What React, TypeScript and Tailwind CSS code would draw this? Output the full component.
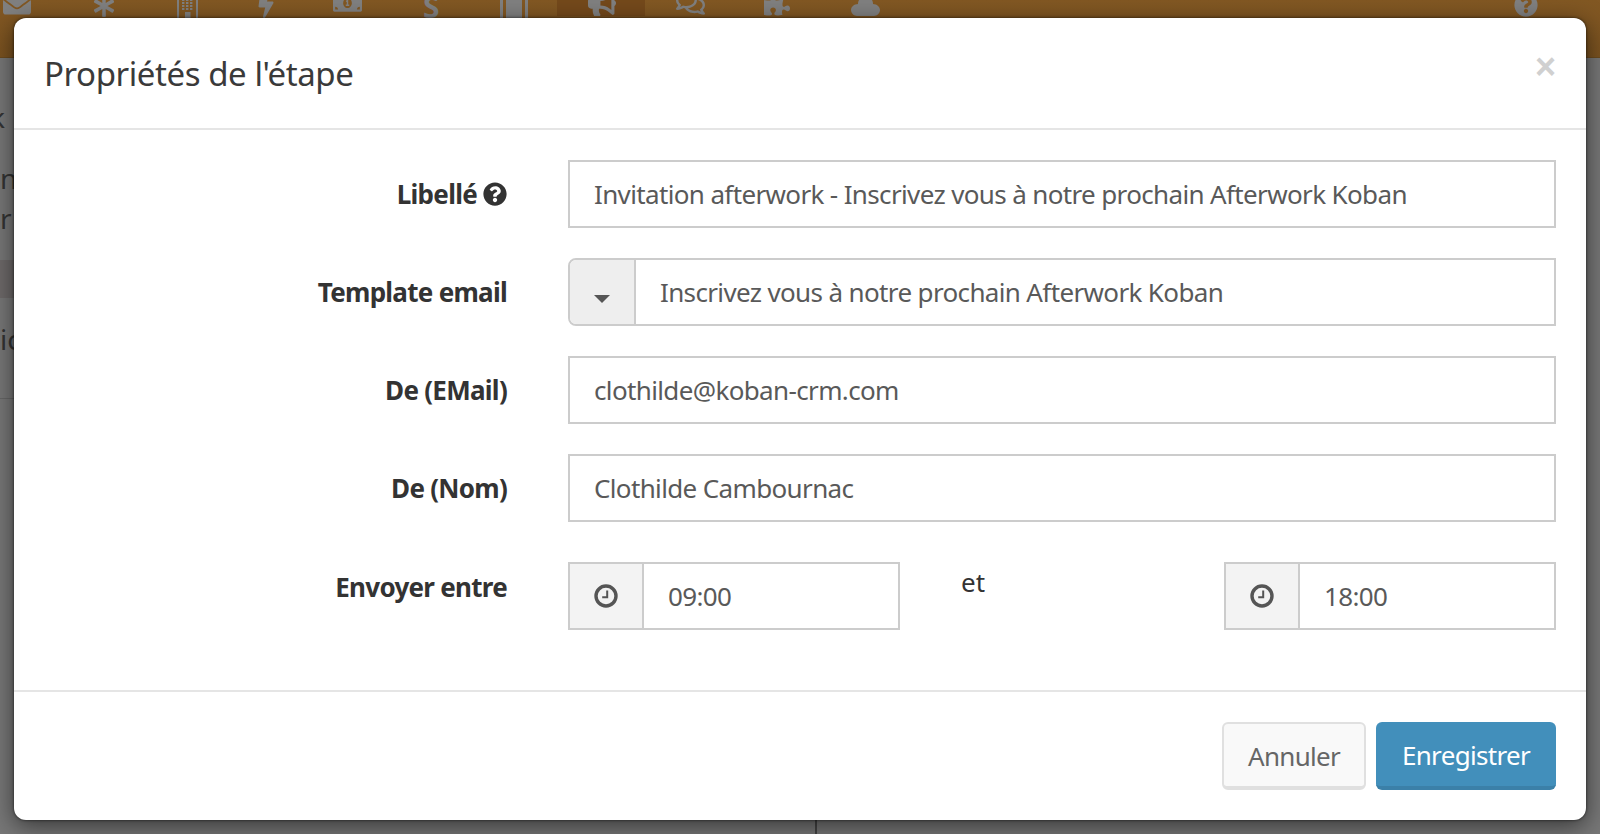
import React from "react";
import { FaEnvelope, FaAsterisk, FaBolt, FaMoneyBillAlt, FaBullhorn, FaRegComments, FaPuzzlePiece, FaQuestionCircle } from "react-icons/fa";

const font = "font-['Noto_Sans','Open_Sans',sans-serif]";
const labelText = "font-bold text-[26px] leading-[38px] text-[#333] tracking-[-0.72px]";
const valueText = "text-[#595959] text-[26px] tracking-[-0.64px]";

function Row({ label, children, help, mb }: { label: string; children: React.ReactNode; help?: boolean; mb: string }) {
  return (
    <div className={`flex ${mb}`}>
      <div className={`w-[493px] pt-[15px] flex justify-end items-start shrink-0 ${labelText}`}>
        <span>{label}</span>
        {help && <FaQuestionCircle className="ml-[6px] mt-[7px] w-[24px] h-[24px] text-[#333]" />}
      </div>
      <div className="ml-[61px] flex-1 min-w-0">{children}</div>
    </div>
  );
}

function TextBox({ value }: { value: string }) {
  return (
    <div className={`h-[68px] border-2 border-[#ccc] flex items-center px-[24px] ${valueText}`}>{value}</div>
  );
}

function Clock() {
  return (
    <svg viewBox="0 0 24 24" className="w-[24px] h-[24px] text-[#555]" fill="none" stroke="currentColor">
      <circle cx="12" cy="12" r="10" strokeWidth="3.4" />
      <path d="M13.2 6.5v6.7H8.2" strokeWidth="2" />
    </svg>
  );
}

function TimeBox({ value, w }: { value: string; w: string }) {
  return (
    <div className={`h-[68px] border-2 border-[#ccc] flex ${w}`}>
      <div className="w-[74px] shrink-0 bg-[#f3f3f3] border-r-2 border-[#ccc] flex items-center justify-center">
        <Clock />
      </div>
      <div className={`flex-1 flex items-center pl-[24px] ${valueText}`}>{value}</div>
    </div>
  );
}

function BuildingIcon() {
  const xs = [5, 9, 13];
  const ys = [1, 4, 7, 10];
  return (
    <svg viewBox="0 0 21 20" className="w-[21px] h-[20px] ml-[62px] -mt-[2px] shrink-0" fill="currentColor">
      <path d="M0 0h2v20H0zM19 0h2v20h-2z" />
      {xs.flatMap((x) => ys.map((y) => <rect key={`${x}-${y}`} x={x} y={y} width="2.4" height="2" />))}
      <rect x="8" y="14" width="5.5" height="6" />
    </svg>
  );
}

function BookIcon() {
  return (
    <svg viewBox="0 0 28 20" className="w-[28px] h-[20px] ml-[61px] -mt-[2px] shrink-0" fill="currentColor">
      <rect x="0" y="0" width="3" height="20" />
      <rect x="6" y="0" width="16" height="20" />
      <rect x="25" y="0" width="3" height="20" />
    </svg>
  );
}

function CloudIcon() {
  return (
    <svg viewBox="0 0 29 16" className="w-[29px] h-[16px] ml-[61px] shrink-0" fill="currentColor">
      <path d="M8 0h13c1 2 1 3 1 4 4 0 7 3 7 6s-3 6-6 6H6c-3 0-6-3-6-6s3-6 7-6c0-1 0-2 1-4z" />
    </svg>
  );
}

export default function App() {
  return (
    <div className={`relative w-full h-[834px] overflow-hidden bg-[#777] ${font}`}>
      <div className="h-[58px] bg-gradient-to-b from-[#825823] to-[#7a5220] border-b border-[#6b4a1e] flex items-start text-[#808080]">
        <FaEnvelope className="w-[28px] h-[28px] ml-[3px] -mt-[10px] shrink-0" />
        <FaAsterisk className="w-[22px] h-[22px] ml-[62px] -mt-[5px] shrink-0" />
        <BuildingIcon />
        <FaBolt className="w-[16px] h-[24px] ml-[60px] -mt-[6px] shrink-0" />
        <FaMoneyBillAlt className="w-[29px] h-[26px] ml-[59px] -mt-[10px] shrink-0" />
        <span className="w-[16px] h-[18px] ml-[61px] shrink-0 overflow-hidden font-bold text-[30px] leading-[14px]">S</span>
        <BookIcon />
        <div className="w-[88px] h-[16px] ml-[29px] shrink-0 bg-[#74491b] flex justify-center overflow-hidden">
          <FaBullhorn className="w-[28px] h-[28px] -mt-[10px] ml-[2px]" />
        </div>
        <FaRegComments className="w-[29px] h-[29px] ml-[31px] -mt-[11px] shrink-0" />
        <FaPuzzlePiece className="w-[26px] h-[26px] ml-[59px] -mt-[9px] shrink-0" />
        <CloudIcon />
        <FaQuestionCircle className="w-[24px] h-[24px] ml-[634px] -mt-[7px] shrink-0" />
      </div>
      <div className="absolute left-0 top-[98px] h-[38px] w-[14px] overflow-hidden text-[28px] leading-[38px] text-[#333]"><span className="block -ml-[10px]">k</span></div>
      <div className="absolute left-0 top-[159px] h-[38px] w-[14px] overflow-hidden text-[28px] leading-[38px] text-[#333]">n</div>
      <div className="absolute left-0 top-[199px] h-[38px] w-[14px] overflow-hidden text-[28px] leading-[38px] text-[#333]">r</div>
      <div className="absolute left-0 top-[320px] h-[38px] w-[14px] overflow-hidden text-[28px] leading-[38px] text-[#333]">ic</div>
      <div className="absolute left-0 top-[260px] w-[14px] h-[38px] bg-[#6d6969]" />
      <div className="absolute left-0 top-[398px] w-[14px] h-[1px] bg-[#666]" />
      <div className="absolute left-[815px] top-[815px] w-[2px] h-[19px] bg-[#444]" />

      <div className="absolute left-[14px] top-[18px] w-[1572px] h-[802px] bg-white rounded-[12px] shadow-[0_6px_24px_rgba(0,0,0,0.55),0_0_3px_rgba(0,0,0,0.7)] flex flex-col">
        <div className="h-[112px] border-b-2 border-[#e5e5e5] flex justify-between items-start pl-[30px] pr-[30px] shrink-0">
          <h4 className="mt-[32px] text-[33px] leading-[48px] text-[#3a3a3a] tracking-[-0.42px]">Propriétés de l'étape</h4>
          <span className="mt-[29px] font-bold text-[#d0d0d0] text-[36px] leading-[40px] font-['Liberation_Sans',sans-serif]">×</span>
        </div>
        <div className="h-[562px] pt-[30px] pr-[30px] border-b-2 border-[#e5e5e5] shrink-0">
          <Row label="Libellé" help mb="mb-[30px]">
            <TextBox value="Invitation afterwork - Inscrivez vous à notre prochain Afterwork Koban" />
          </Row>
          <Row label="Template email" mb="mb-[30px]">
            <div className="h-[68px] border-2 border-[#ccc] rounded-l-[8px] flex">
              <div className="w-[66px] shrink-0 bg-[#eee] border-r-2 border-[#ccc] rounded-l-[6px] flex items-center justify-center pt-[14px]">
                <span className="w-0 h-0 border-x-[8px] border-x-transparent border-t-[8px] border-t-[#555]" />
              </div>
              <div className={`flex-1 flex items-center pl-[24px] ${valueText}`}>Inscrivez vous à notre prochain Afterwork Koban</div>
            </div>
          </Row>
          <Row label="De (EMail)" mb="mb-[30px]"><TextBox value="clothilde@koban-crm.com" /></Row>
          <Row label="De (Nom)" mb="mb-[40px]"><TextBox value="Clothilde Cambournac" /></Row>
          <div className="flex">
            <div className={`w-[493px] pt-[6px] text-right shrink-0 ${labelText}`}>Envoyer entre</div>
            <div className="ml-[61px] flex-1 flex min-w-0">
              <TimeBox value="09:00" w="w-[332px]" />
              <div className="w-[324px] pl-[61px] pt-[1px] text-[26px] leading-[38px] text-[#333]">et</div>
              <TimeBox value="18:00" w="w-[332px]" />
            </div>
          </div>
        </div>
        <div className="flex-1 flex justify-end items-start pt-[30px] pr-[30px] gap-[10px]">
          <button className="w-[144px] h-[68px] rounded-[6px] border-2 border-[#e0e0e0] border-b-4 bg-[#f9f9f9] pt-[2px] text-[#666] text-[26px] tracking-[-0.7px]">Annuler</button>
          <button className="w-[180px] h-[68px] rounded-[6px] bg-[#428fbb] border-b-4 border-[#3b80a8] pt-[2px] text-white text-[26px] tracking-[-0.68px]">Enregistrer</button>
        </div>
      </div>
    </div>
  );
}
